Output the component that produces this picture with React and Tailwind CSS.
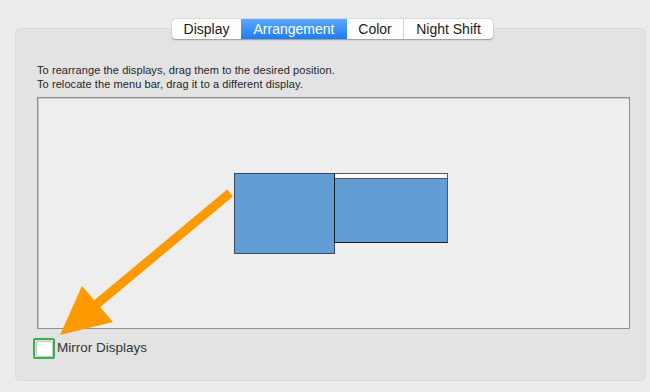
import React from "react";

const tabs = ["Display", "Arrangement", "Color", "Night Shift"];
const tabWidths = ["w-[69px]", "w-[106px]", "w-[56px]", "w-[90px]"];

export default function App() {
  return (
    <div
      className="relative w-[650px] h-[392px] overflow-hidden bg-[#ececec] pt-[19px]"
      style={{ fontFamily: "'Liberation Sans', Arial, sans-serif" }}
    >
      <div className="relative z-10 flex justify-start pl-[172px]">
        <div className="flex h-[20px] rounded-[4px] bg-white shadow-[0_0.5px_1.5px_rgba(0,0,0,0.35)] overflow-hidden">
          {tabs.map((t, i) => (
            <div
              key={t}
              className={`${tabWidths[i]} flex items-center justify-center text-[14px] leading-none ${
                t === "Arrangement"
                  ? "bg-gradient-to-b from-[#5aa7fa] to-[#1c7cf2] text-white"
                  : "text-[#1a1a1a]"
              } ${i > 0 && t !== "Arrangement" && tabs[i - 1] !== "Arrangement" ? "border-l border-[#d4d4d4]" : ""}`}
            >
              {t}
            </div>
          ))}
        </div>
      </div>

      <div className="ml-[15px] -mt-[11px] w-[631px] h-[353px] rounded-[5px] bg-[#e3e3e3] border border-[#dadada] pl-[21px] pt-[34px]">
        <div className="text-[11px] leading-[14px] tracking-[0.08px] text-[#1f1f1f]">
          <div>To rearrange the displays, drag them to the desired position.</div>
          <div>To relocate the menu bar, drag it to a different display.</div>
        </div>

        <div className="relative mt-[6px] w-[593px] h-[232px] bg-[#eeeeee] border border-[#8f8f8f] shadow-[inset_1px_1px_0_#c8c8c8]">
          <div className="absolute left-[196px] top-[75px] w-[101px] h-[81px] bg-[#639dd5] border border-[#3b4a5a]" />
          <div className="absolute left-[296px] top-[75px] w-[114px] h-[70px] bg-[#639dd5] border border-[#555] border-l-[#1a1a1a] border-b-[#1a1a1a] flex flex-col">
            <div className="h-[5px] bg-white border-b border-[#555]" />
          </div>
        </div>

        <div className="mt-[9px] -ml-[4px] flex items-center gap-[2px]">
          <div className="w-[22px] h-[21px] border-2 border-[#34b34a] rounded-[2px] flex items-center justify-center bg-[#e3e3e3]">
            <div className="w-[17px] h-[16px] bg-white border border-[#c8c8c8] rounded-[2px]" />
          </div>
          <span className="text-[13.5px] text-[#333333]">Mirror Displays</span>
        </div>
      </div>

      <svg className="absolute left-0 top-0 z-20" width="650" height="392" viewBox="0 0 650 392">
        <line x1="230" y1="193" x2="92" y2="308" stroke="#fe9a00" strokeWidth="9" />
        <polygon points="60,335 82,286 113,322" fill="#fe9a00" />
      </svg>
    </div>
  );
}
